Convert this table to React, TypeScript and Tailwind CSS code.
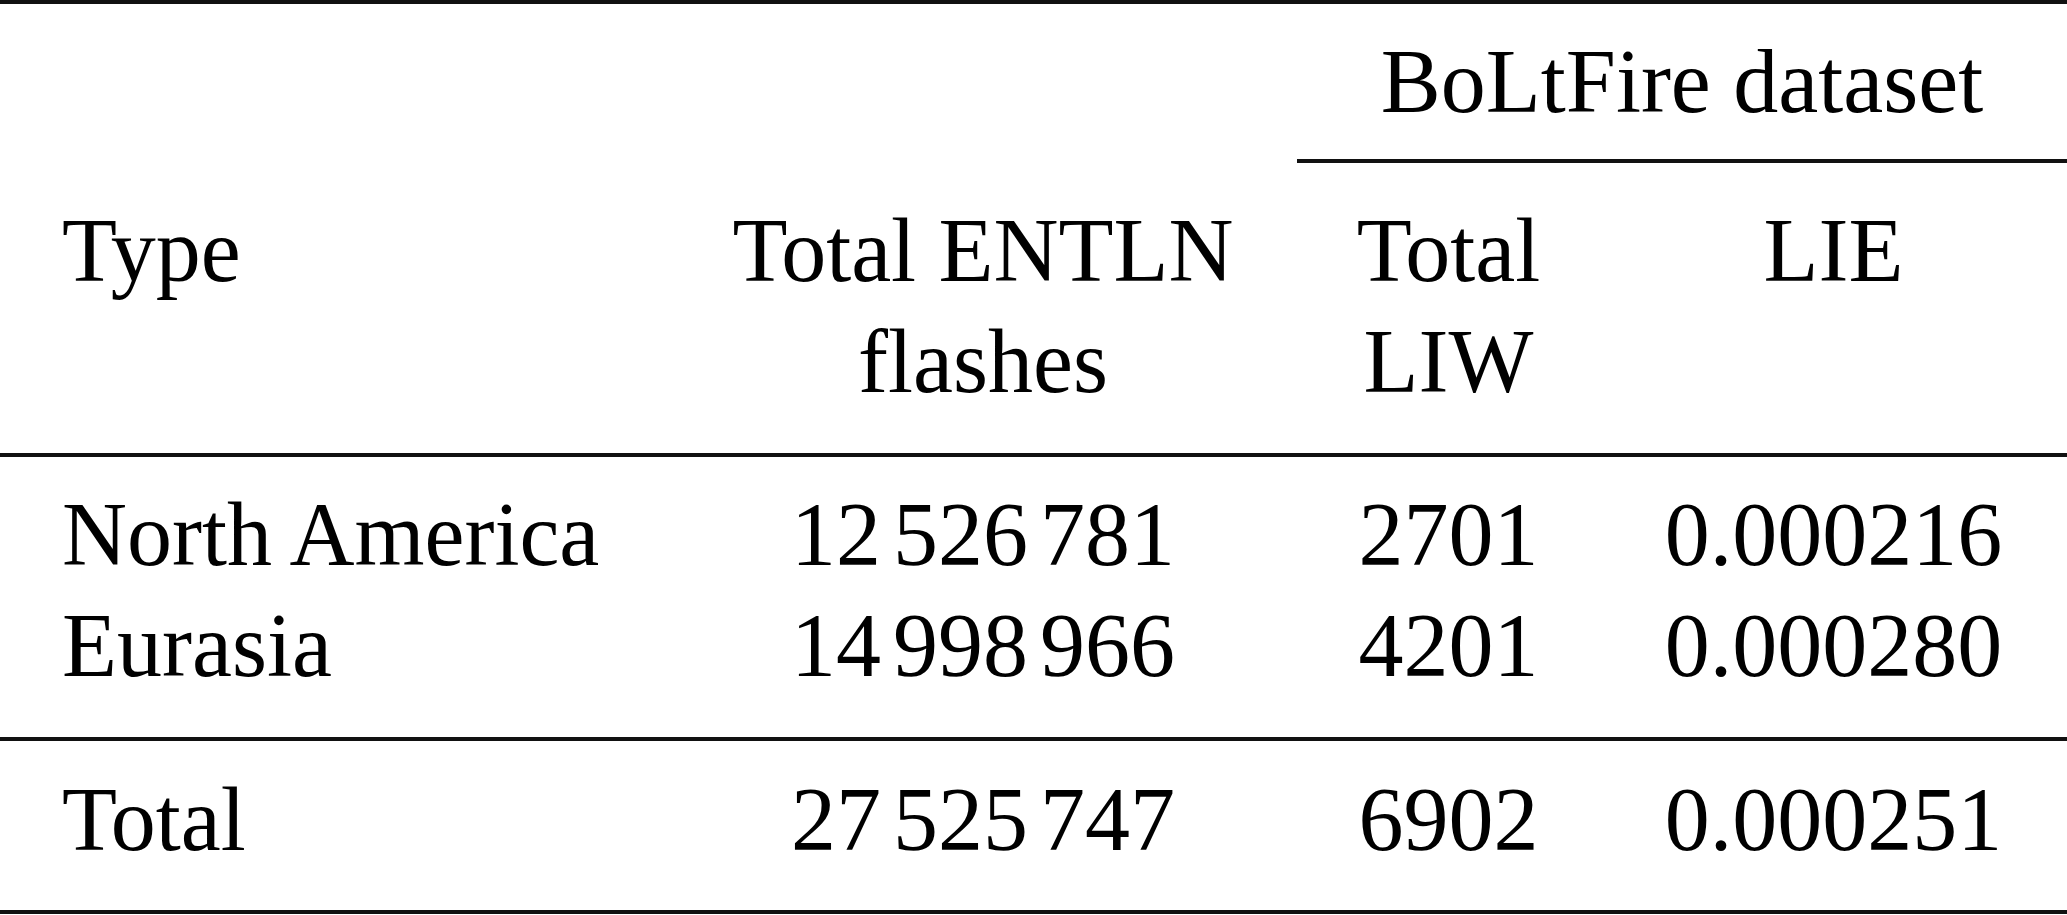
import React from 'react';

interface Row {
  type: string;
  flashes: string[];
  liw: string;
  lie: string;
}

const rows: Row[] = [
  { type: 'North America', flashes: ['12', '526', '781'], liw: '2701', lie: '0.000216' },
  { type: 'Eurasia', flashes: ['14', '998', '966'], liw: '4201', lie: '0.000280' },
];

const total: Row = { type: 'Total', flashes: ['27', '525', '747'], liw: '6902', lie: '0.000251' };

const grid = 'grid grid-cols-[669px_628px_303px_467px]';

// digit groups separated by a thin gap, like siunitx output
const Grouped: React.FC<{ parts: string[] }> = ({ parts }) => (
  <span>
    {parts.map((p, i) => (
      <span key={i} className={i > 0 ? 'ml-[12px]' : ''}>
        {p}
      </span>
    ))}
  </span>
);

const Rule: React.FC<{ className?: string }> = ({ className = '' }) => (
  <div className={`h-[4px] bg-[#111] ${className}`} />
);

const DataRow: React.FC<{ row: Row }> = ({ row }) => (
  <div className={grid}>
    <div className="pl-[62px]">{row.type}</div>
    <div className="text-center">
      <Grouped parts={row.flashes} />
    </div>
    <div className="text-center">{row.liw}</div>
    <div className="text-center">{row.lie}</div>
  </div>
);

const App: React.FC = () => {
  return (
    <div className="w-[2067px] h-[915px] bg-white text-black font-['Liberation_Serif','Times_New_Roman',serif] text-[90px] leading-[111px] overflow-hidden">
      <Rule />

      <div className={`${grid} mt-[22px]`}>
        <div className="col-start-3 col-span-2 text-center">BoLtFire dataset</div>
      </div>
      <div className={`${grid} mt-[22px]`}>
        <Rule className="col-start-3 col-span-2" />
      </div>

      <div className={`${grid} mt-[32px]`}>
        <div className="pl-[62px]">Type</div>
        <div className="text-center">
          Total ENTLN
          <br />
          flashes
        </div>
        <div className="text-center">
          Total
          <br />
          LIW
        </div>
        <div className="text-center">LIE</div>
      </div>

      <Rule className="mt-[36px]" />

      <div className="mt-[22px]">
        {rows.map((r) => (
          <DataRow key={r.type} row={r} />
        ))}
      </div>

      <Rule className="mt-[36px]" />

      <div className="mt-[23px]">
        <DataRow row={total} />
      </div>

      <Rule className="mt-[35px]" />
    </div>
  );
};

export default App;
